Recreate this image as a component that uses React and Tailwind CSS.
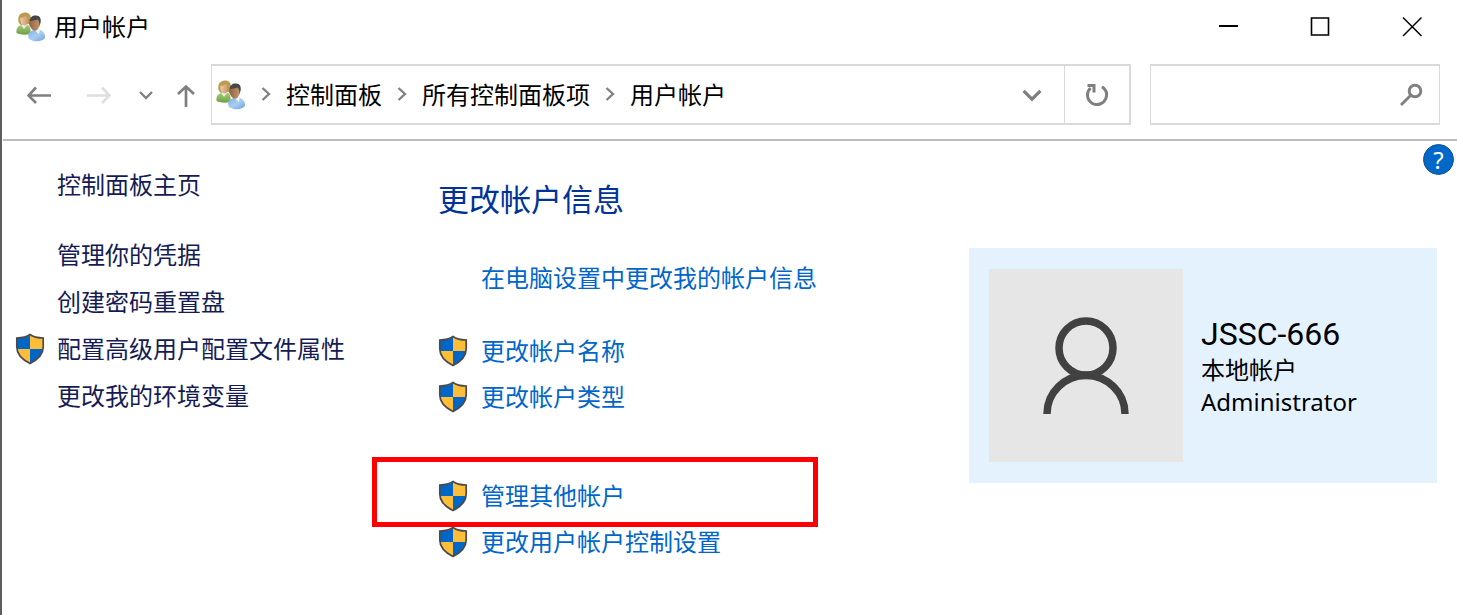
import React, { useState } from 'react';

const crumbs = ['控制面板', '所有控制面板项', '用户帐户'];

const sideLinks = [
  { label: '管理你的凭据' },
  { label: '创建密码重置盘' },
  { label: '配置高级用户配置文件属性', shield: true },
  { label: '更改我的环境变量' },
];

const taskGroups = [
  [{ label: '更改帐户名称' }, { label: '更改帐户类型' }],
  [{ label: '管理其他帐户', marked: true }, { label: '更改用户帐户控制设置' }],
];

function UsersIcon() {
  return (
    <svg viewBox="0 0 30 30" className="size-[30px] shrink-0" aria-hidden="true">
      <defs>
        <linearGradient id="green" x1="0" y1="0" x2="0" y2="1">
          <stop offset="0" stopColor="#a3cc78" />
          <stop offset="1" stopColor="#6f9f45" />
        </linearGradient>
        <linearGradient id="blue" x1="0" y1="0" x2="1" y2="1">
          <stop offset="0" stopColor="#7fb0e3" />
          <stop offset="0.5" stopColor="#a9cdf2" />
          <stop offset="1" stopColor="#6d9fd6" />
        </linearGradient>
        <linearGradient id="face" x1="0" y1="0" x2="1" y2="0">
          <stop offset="0" stopColor="#f3cda6" />
          <stop offset="1" stopColor="#c98f66" />
        </linearGradient>
        <linearGradient id="tan" x1="0" y1="0" x2="1" y2="0">
          <stop offset="0" stopColor="#8f6040" />
          <stop offset="1" stopColor="#c39469" />
        </linearGradient>
      </defs>
      <path d="M0.500 21C0 16 2 14 5 13L12 13C15 15 15 19 14 22C10 23 4 23 0.500 21Z" fill="url(#green)" />
      <path d="M5 13L8 17L11 13Z" fill="#e9f1de" />
      <path d="M2.500 10C1.500 4 4 0.500 9 0.500C13 0.500 15 3 15 7L13 12L5 13C4 12 3 11 2.500 10Z" fill="#b99c50" />
      <path d="M4.500 5.500C7 6 9 5 10 4C12 5 13 7 12 10C11 13 9 14 7 13C5 12 4 9 4.500 5.500Z" fill="url(#face)" />
      <path d="M13 27C11 22 13 19 18 18L24 18C27 19 29.500 22 29 26C25 30.500 18 30 13 27Z" fill="url(#blue)" />
      <path d="M17 17L23 22L24 17Z" fill="#eef5fd" />
      <path d="M13.500 9C14 5 17 3 20 3.500C24 3.500 25.500 7 24.500 11L23 15L16 14Z" fill="#45464a" />
      <path d="M13.500 9C17 9 19 8 21.500 7.500C24 10 24 14 22 17C20 20 17 19 15 16C13 13 12.500 11 13.500 9Z" fill="url(#tan)" />
    </svg>
  );
}

function Shield() {
  return (
    <svg viewBox="0 0 30 32" className="h-8 w-[30px]" aria-hidden="true">
      <path d="M15 2C11 5 7 5 2 5V16C3 22 8 27 15 30Z" fill="#0067c8" />
      <path d="M15 2C19 5 23 5 28 5V16C27 22 22 27 15 30Z" fill="#ffbd38" />
      <path d="M2 16H15V30C8 27 3 22 2 16Z" fill="#ffbd38" />
      <path d="M15 16H28C27 22 22 27 15 30Z" fill="#0067c8" />
      <path
        d="M15 1.500C11 4.500 7 5 1.800 5V14C1.800 22 8 27 15 30.500C22 27 28.200 22 28.200 14V5C23 5 19 4.500 15 1.500Z"
        fill="none"
        stroke="#4a4a4a"
        strokeWidth="1.700"
      />
    </svg>
  );
}

function ChevronDown({ className }) {
  return (
    <svg viewBox="0 0 14 10" className={className} fill="none" stroke="currentColor" aria-hidden="true">
      <path d="M1 2L7 8L13 2" strokeWidth="2.300" />
    </svg>
  );
}

function ChevronRight() {
  return (
    <svg viewBox="0 0 12 16" className="mx-3.5 h-4 w-3" fill="none" stroke="currentColor" aria-hidden="true">
      <path d="M2.500 1L9 7L2.500 13" strokeWidth="2.300" />
    </svg>
  );
}

function TitleBar() {
  return (
    <header className="flex h-[54px] items-center">
      <div className="flex flex-1 items-center gap-2 pl-[13px]">
        <UsersIcon />
        <h1 className="text-2xl leading-8">用户帐户</h1>
      </div>
      <button aria-label="最小化" className="flex h-full w-[92px] items-center justify-center">
        <svg viewBox="0 0 22 22" className="size-[22px]" aria-hidden="true">
          <path d="M3 10H22" stroke="#000" strokeWidth="2" />
        </svg>
      </button>
      <button aria-label="最大化" className="flex h-full w-[92px] items-center justify-center">
        <svg viewBox="0 0 22 22" className="size-[22px]" aria-hidden="true">
          <path d="M3.500 2H20.500V19H3.500Z" fill="none" stroke="#000" strokeWidth="1.600" />
        </svg>
      </button>
      <button aria-label="关闭" className="flex h-full w-[92px] items-center justify-center">
        <svg viewBox="0 0 22 22" className="size-[22px]" aria-hidden="true">
          <path d="M3 1.500L21.500 20M21.500 1.500L3 20" stroke="#000" strokeWidth="1.500" />
        </svg>
      </button>
    </header>
  );
}

function Toolbar() {
  const [query, setQuery] = useState('');

  return (
    <nav className="flex items-center border-b-2 border-[#bdbdbd] pt-2.5 pb-3.5 pr-[17px] pl-6 text-[#7f7f7f]">
      <button aria-label="后退">
        <svg viewBox="0 0 24 20" className="h-5 w-6" fill="none" stroke="currentColor" strokeWidth="2.600" aria-hidden="true">
          <path d="M24 10.500H2M9 2.500L1.500 10.500L9 18" />
        </svg>
      </button>
      <button aria-label="前进" className="ml-9 text-[#dedede]">
        <svg viewBox="0 0 24 20" className="h-5 w-6" fill="none" stroke="currentColor" strokeWidth="2.600" aria-hidden="true">
          <path d="M0 10.500H22M15 2.500L22.500 10.500L15 18" />
        </svg>
      </button>
      <button aria-label="最近浏览的位置" className="ml-7">
        <ChevronDown className="h-2.5 w-3.5" />
      </button>
      <button aria-label="上移" className="ml-6">
        <svg viewBox="0 0 18 24" className="h-6 w-[18px]" fill="none" stroke="currentColor" strokeWidth="2.700" aria-hidden="true">
          <path d="M9 24V3M1 11L9 3.500L17 11" />
        </svg>
      </button>

      <div className="ml-4 flex h-[61px] flex-1 border-2 border-l border-[#d9d9d9]">
        <div className="flex flex-1 items-center pl-1">
          <UsersIcon />
          {crumbs.map(crumb => (
            <React.Fragment key={crumb}>
              <ChevronRight />
              <a href="#" className="text-2xl leading-8 text-black">{crumb}</a>
            </React.Fragment>
          ))}
        </div>
        <button aria-label="以前的位置" className="flex w-16 items-center justify-center">
          <ChevronDown className="h-3.5 w-5" />
        </button>
        <button aria-label="刷新" className="flex w-[65px] items-center justify-center border-l border-[#d9d9d9]">
          <svg viewBox="0 0 24 24" className="size-6" fill="none" stroke="currentColor" strokeWidth="3" aria-hidden="true">
            <path d="M17 3.800C21 6.500 22.500 11 20.800 15.500C18.500 21 12.500 23 7.500 20.500C1.500 17 1 9.500 5.500 5" />
            <path d="M2.500 2.500H9V9.500" />
          </svg>
        </button>
      </div>

      <label className="ml-[19px] flex h-[61px] w-[290px] items-center border-x border-y-2 border-[#d9d9d9] pr-4">
        <input
          aria-label="搜索控制面板"
          value={query}
          onChange={e => setQuery(e.target.value)}
          className="h-full min-w-0 flex-1 pl-3 text-2xl text-black outline-none"
        />
        <svg viewBox="0 0 24 24" className="size-6" fill="none" stroke="currentColor" strokeWidth="2.900" aria-hidden="true">
          <circle cx="16" cy="8" r="5.800" />
          <path d="M12 12L2 22" />
        </svg>
      </label>
    </nav>
  );
}

function Sidebar() {
  return (
    <aside className="w-[435px] shrink-0 pt-5 text-2xl leading-[47px] text-[#151c55]">
      <a href="#" className="block pl-[54px]">控制面板主页</a>
      <ul className="mt-[23px]">
        {sideLinks.map(link => (
          <li key={link.label} className="flex items-center">
            <span className="flex w-[54px] pl-3">{link.shield && <Shield />}</span>
            <a href="#">{link.label}</a>
          </li>
        ))}
      </ul>
    </aside>
  );
}

function Tasks() {
  return (
    <section className="flex-1 pt-[35px] text-2xl leading-[46px] text-[#0066cc]">
      <h2 className="text-[31px] leading-[46px] text-[#003399]">更改帐户信息</h2>
      <a href="#" className="mt-[33px] block pl-[43px]">在电脑设置中更改我的帐户信息</a>
      {taskGroups.map((group, i) => (
        <ul key={i} className={i === 0 ? 'mt-[27px]' : 'mt-[53px]'}>
          {group.map(task => (
            <li key={task.label} className="relative flex items-center">
              <span className="flex w-[43px]"><Shield /></span>
              <a href="#">{task.label}</a>
              {task.marked && (
                <span className="pointer-events-none absolute -top-4 -left-[66px] h-[70px] w-[446px] border-[5px] border-[#ff0000]" />
              )}
            </li>
          ))}
        </ul>
      ))}
    </section>
  );
}

function AccountCard() {
  return (
    <section className="mt-[107px] mr-5 flex w-[468px] shrink-0 items-center gap-[18px] self-start bg-[#e4f2fe] px-5 py-[21px]">
      <div className="flex h-[193px] w-[194px] shrink-0 items-center justify-center bg-[#e6e6e6]">
        <svg viewBox="0 0 86 97" className="h-[97px] w-[86px]" fill="none" stroke="#414141" strokeWidth="7.500" aria-hidden="true">
          <ellipse cx="43" cy="31" rx="27" ry="27" />
          <path d="M4 97C4 75 22 58.500 43 58.500C64 58.500 82 75 82 97" />
        </svg>
      </div>
      <div>
        <p className="font-[Roboto] text-[32px] leading-10">JSSC-666</p>
        <p className="text-2xl leading-8">本地帐户</p>
        <p className="text-2xl leading-8">Administrator</p>
      </div>
    </section>
  );
}

export default function App() {
  return (
    <div className="flex min-h-screen flex-col border-l-2 border-[#5c5e61] bg-white pl-px font-['Noto_Sans','Noto_Sans_CJK_SC',sans-serif] text-black">
      <TitleBar />
      <Toolbar />
      <main className="relative flex flex-1">
        <Sidebar />
        <Tasks />
        <AccountCard />
        <button
          aria-label="帮助"
          className="absolute top-[3px] right-[3px] flex size-[31px] items-center justify-center rounded-full border border-[#15548c] bg-[#0068c9] text-2xl leading-none text-white"
        >
          ?
        </button>
      </main>
    </div>
  );
}
